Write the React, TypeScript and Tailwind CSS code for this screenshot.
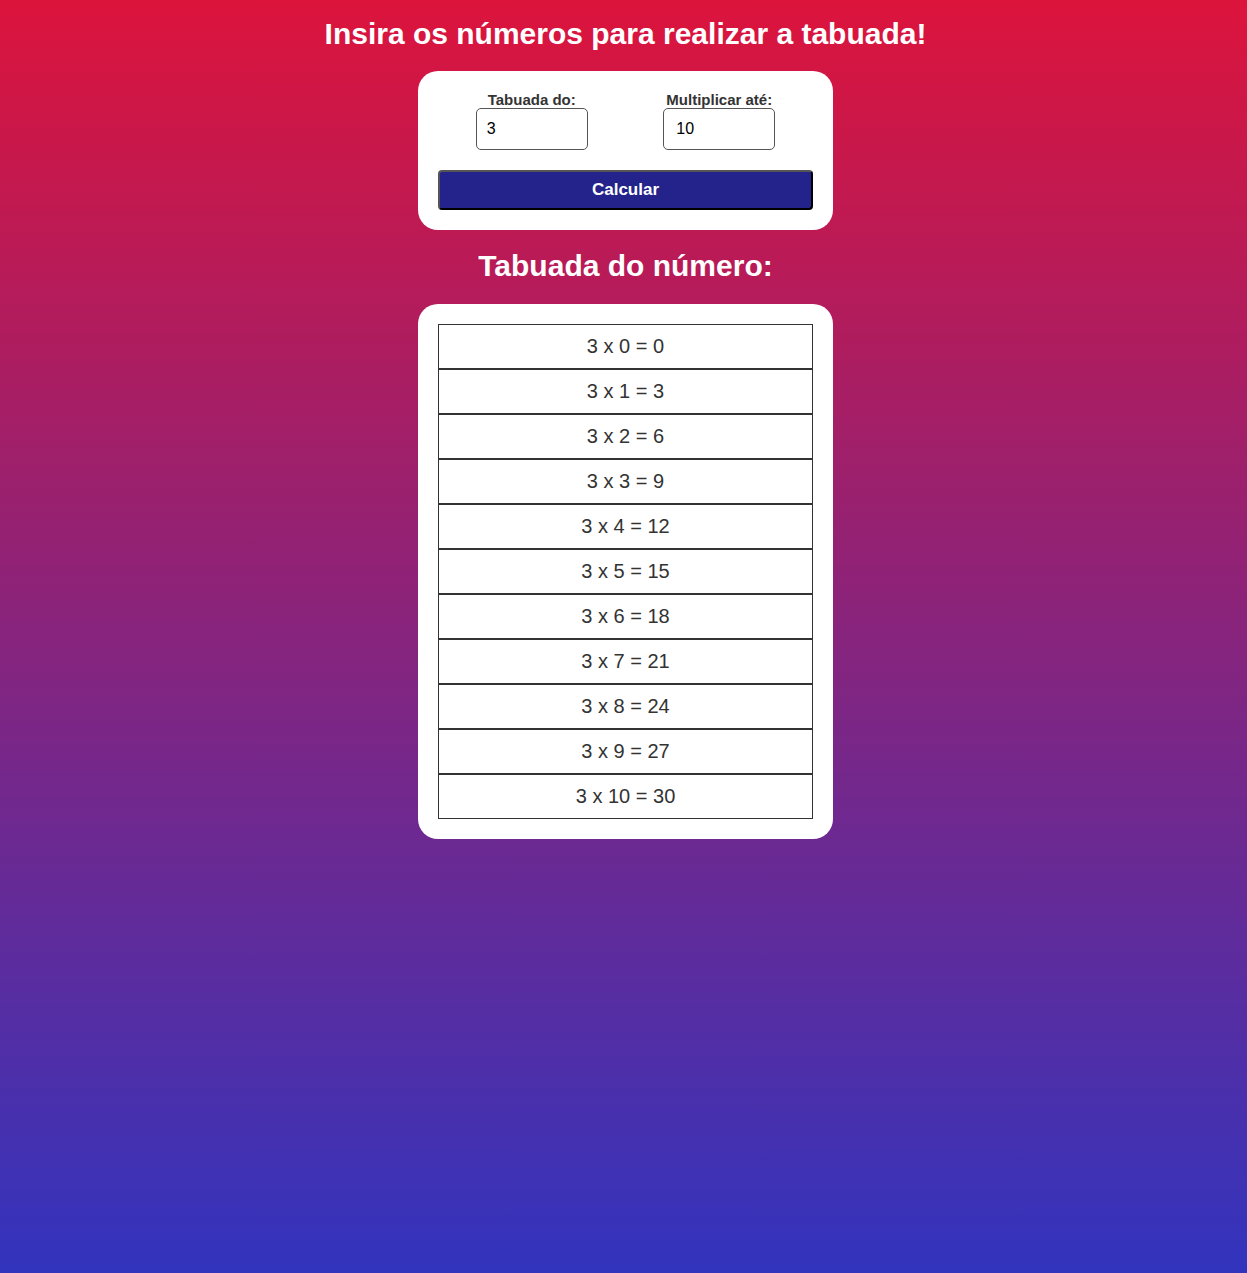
import React from "react";

export default function App() {
  const n = 3;
  const rows = Array.from({ length: 11 }, (_, i) => i);
  return (
    <div
      className="min-h-[1273px] w-full bg-[linear-gradient(to_bottom,#dc143c,#3234be)] flex flex-col items-center pl-[4px]"
      style={{ fontFamily: '"Liberation Sans", Arial, sans-serif' }}
    >
      <h1 className="mt-[16px] text-[30px] leading-[35px] font-bold text-white">
        Insira os números para realizar a tabuada!
      </h1>
      <div className="mt-[20px] w-[415px] bg-white rounded-[20px] p-[20px]">
        <div className="flex">
          <div className="flex-1 flex flex-col items-center">
            <label className="text-[15px] leading-[17px] font-bold text-[#333]">Tabuada do:</label>
            <div className="w-[112px] h-[42px] border border-[#555] rounded-[5px] flex items-center pl-[10px] text-[16px] text-black">
              3
            </div>
          </div>
          <div className="flex-1 flex flex-col items-center">
            <label className="text-[15px] leading-[17px] font-bold text-[#333]">Multiplicar até:</label>
            <div className="w-[112px] h-[42px] border border-[#555] rounded-[5px] flex items-center pl-[12px] text-[16px] text-black">
              10
            </div>
          </div>
        </div>
        <button className="mt-[20px] w-full h-[40px] bg-[#23238b] text-white font-bold text-[17px] rounded-[4px] border-2 border-t-[#555] border-l-[#555] border-r-black border-b-black">
          Calcular
        </button>
      </div>
      <h2 className="mt-[18px] text-[30px] leading-[35px] font-bold text-white">
        Tabuada do número:
      </h2>
      <div className="mt-[21px] w-[415px] bg-white rounded-[20px] p-[20px]">
        {rows.map((i) => (
          <div
            key={i}
            className="h-[45px] border border-[#333] flex items-center justify-center text-[20px] leading-[23px] pb-[1px] text-[#333]"
          >
            {n} x {i} = {n * i}
          </div>
        ))}
      </div>
    </div>
  );
}
